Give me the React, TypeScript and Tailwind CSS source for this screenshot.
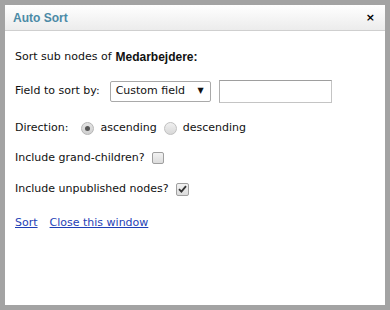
export default function App() {
  return (
    <div className="w-[390px] h-[310px] bg-[#a3a3a3] p-[5px]" style={{ fontFamily: '"DejaVu Sans", Verdana, sans-serif' }}>
      <div className="w-full h-full bg-white flex flex-col">
        <div className="h-[26px] flex items-center justify-between pl-[8px] pr-[10px] border-b border-[#cfcfcf] bg-gradient-to-b from-white to-[#ececec]">
          <span className="text-[12px] font-bold text-[#4b8aa6]" style={{ fontFamily: '"Liberation Sans", Arial, sans-serif' }}>Auto Sort</span>
          <span className="text-[11px] font-bold text-black leading-none">×</span>
        </div>
        <div className="pl-[10px] pt-[15px] text-[11px] text-[#111]">
          <div className="h-[22px] flex items-center">
            Sort sub nodes of{' '}
            <b className="ml-[4px] font-bold text-[12px]" style={{ fontFamily: '"Liberation Sans", Arial, sans-serif' }}>Medarbejdere:</b>
          </div>
          <div className="mt-[12px] h-[22px] flex items-center">
            <span>Field to sort by:</span>
            <div className="ml-[10px] w-[101px] h-[21px] border border-[#a9a9a9] rounded-[2px] flex items-center justify-between pl-[5px] pr-[6px]">
              <span>Custom field</span>
              <span className="text-[8px]">▼</span>
            </div>
            <div className="ml-[8px] w-[113px] h-[23px] border border-[#c4c4c4] border-t-[#9e9e9e] border-l-[#b0b0b0]" />
          </div>
          <div className="mt-[15px] h-[22px] flex items-center">
            <span>Direction:</span>
            <span className="ml-[13px] w-[13px] h-[13px] rounded-full border border-[#b5b5b5] bg-gradient-to-b from-[#e3e3e3] to-[#d0d0d0] flex items-center justify-center">
              <span className="w-[5px] h-[5px] rounded-full bg-[#555]" />
            </span>
            <span className="ml-[6px]">ascending</span>
            <span className="ml-[7px] w-[13px] h-[13px] rounded-full border border-[#c0c0c0] bg-gradient-to-b from-[#f0f0f0] to-[#d8d8d8]" />
            <span className="ml-[6px]">descending</span>
          </div>
          <div className="mt-[8px] h-[22px] flex items-center">
            <span>Include grand-children?</span>
            <span className="ml-[7px] w-[12px] h-[12px] rounded-[2px] border border-[#9f9f9f] bg-gradient-to-b from-[#f2f2f2] to-[#dcdcdc]" />
          </div>
          <div className="mt-[9px] h-[22px] flex items-center">
            <span>Include unpublished nodes?</span>
            <span className="ml-[7px] w-[13px] h-[13px] rounded-[2px] border border-[#9f9f9f] bg-gradient-to-b from-[#f2f2f2] to-[#dcdcdc] flex items-center justify-center">
              <svg width="9" height="8" viewBox="0 0 9 8">
                <path d="M1 4.2 L3.4 6.6 L8 1.2" stroke="#333" strokeWidth="1.8" fill="none" />
              </svg>
            </span>
          </div>
          <div className="mt-[12px] h-[22px] flex items-center text-[#1f3fb6] underline">
            <span>Sort</span>
            <span className="ml-[12px]">Close this window</span>
          </div>
        </div>
      </div>
    </div>
  );
}
